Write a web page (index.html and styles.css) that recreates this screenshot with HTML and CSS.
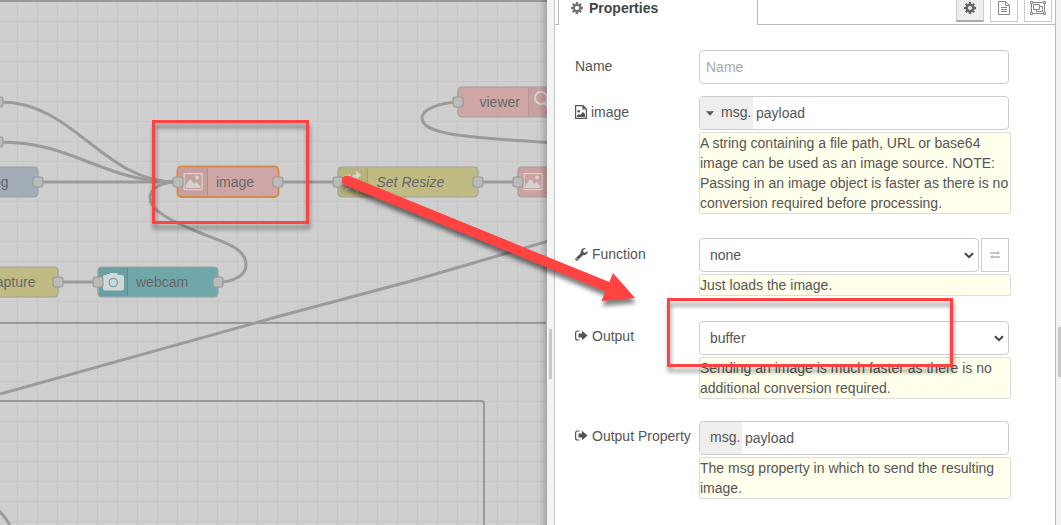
FILE: index.html
```html
<!DOCTYPE html>
<html lang="en">
<head>
<meta charset="utf-8">
<title>Flow editor</title>
<link rel="stylesheet" href="styles.css">
</head>
<body>
<div class="editor">
  <div class="workspace">
    <svg class="canvas" width="547" height="525" viewBox="0 0 547 525">
      <defs>
        <pattern id="grid" x="17" y="1" width="20" height="20" patternUnits="userSpaceOnUse">
          <path d="M0 0H20V1H1V20H0Z" fill="#c7c7c7"/>
        </pattern>
        <linearGradient id="edge"><stop offset="0" stop-color="#000" stop-opacity="0"/><stop offset="1" stop-color="#000" stop-opacity=".2"/></linearGradient>
        <g id="picture" fill="none" stroke="#d6d2d2">
          <rect x=".6" y=".6" width="18" height="16" stroke-width="1.2"/>
          <path d="M2 15V12L7 6L11 11L13 9L17 13V15Z" fill="#d6d2d2" stroke="none"/>
          <circle cx="13.500" cy="4.500" r="1.900" fill="#d6d2d2" stroke="none"/>
        </g>
      </defs>
      <rect width="547" height="525" fill="#cfcfcf"/>
      <rect width="547" height="525" fill="url(#grid)"/>
      <g class="group-line">
        <path d="M0 1H547M0 323H546M0 401H481Q484 401 484 404V525"/>
      </g>
      <g class="wire">
        <path d="M0 102C75 102 102 182 177 182"/>
        <path d="M0 142C75 142 102 182 177 182"/>
        <path d="M38 182H177M278 182H338M478 182H518M58 282H98"/>
        <path d="M218 282C234 282 246 275 246 265C246 247 222 242 198 232C172 221 150 211 150 198C150 188 162 182 177 182"/>
        <path d="M458 102C437 103 422 110 422 118C422 134 462 137 547 142.500"/>
        <path d="M0 394L280 316L415 280L547 241.500"/>
        <path d="M-6 506Q3 513 11 527"/>
      </g>
      <g class="node">
        <rect x="-60" y="167" width="98" height="30" rx="4" fill="#a3adb8"/>
        <rect x="177.500" y="166.500" width="101" height="30.500" rx="4" fill="#cfa6a6" class="selected"/>
        <rect x="338" y="167" width="140" height="30" rx="4" fill="#c0bb83"/>
        <rect x="458" y="87" width="140" height="30" rx="4" fill="#cfa6a6"/>
        <rect x="518" y="167" width="100" height="30" rx="4" fill="#cba1a1"/>
        <rect x="-60" y="267" width="118" height="30" rx="4" fill="#c0bb83"/>
        <rect x="98" y="267" width="120" height="30" rx="4" fill="#70a7aa"/>
      </g>
      <g fill="#000" fill-opacity=".04">
        <rect x="179" y="168" width="29" height="28"/>
        <rect x="339" y="168" width="29" height="28"/>
        <rect x="529" y="88" width="20" height="28"/>
        <rect x="99" y="268" width="29" height="28"/>
      </g>
      <path d="M207.500 168V196M367.500 168V196M528.500 88V116M127.500 268V296" stroke="#000" stroke-opacity=".1"/>
      <use href="#picture" x="183.500" y="173"/>
      <use href="#picture" x="523.500" y="173"/>
      <g class="glyph-line">
        <circle cx="541" cy="98" r="6"/><path d="M545 103L550 109" stroke-width="3"/>
        <path d="M345 176H349L351 179M345 189H349L354 176H357M354 189H358" stroke-width="2.500"/>
      </g>
      <path d="M356 170.500L361 175L356 179.500ZM356 185L361 189L356 193Z" fill="#d6d6ca"/>
      <path d="M105 275H107V274H109V275L110 273H117L118 275H122Q124 275 124 277V288.500Q124 290.500 122 290.500H105Q103 290.500 103 288.500V277Q103 275 105 275Z" fill="#d2d6d6"/>
      <circle cx="113.300" cy="282.500" r="4.200" fill="none" stroke="#70a7aa" stroke-width="1.300"/>
      <g class="port">
        <rect x="-7" y="97" width="10" height="10" rx="2.500"/>
        <rect x="-7" y="137" width="10" height="10" rx="2.500"/>
        <rect x="33" y="177" width="10" height="10" rx="2.500"/>
        <rect x="173" y="177" width="10" height="10" rx="2.500"/>
        <rect x="273" y="177" width="10" height="10" rx="2.500"/>
        <rect x="333" y="177" width="10" height="10" rx="2.500"/>
        <rect x="473" y="177" width="10" height="10" rx="2.500"/>
        <rect x="513" y="177" width="10" height="10" rx="2.500"/>
        <rect x="453" y="97" width="10" height="10" rx="2.500"/>
        <rect x="53" y="277" width="10" height="10" rx="2.500"/>
        <rect x="93" y="277" width="10" height="10" rx="2.500"/>
        <rect x="213" y="277" width="10" height="10" rx="2.500"/>
      </g>
      <g class="node-label">
        <text x="8.500" y="187" text-anchor="end">og</text>
        <text x="216" y="187">image</text>
        <text x="376.500" y="187" font-style="italic">Set Resize</text>
        <text x="479.500" y="107">viewer</text>
        <text x="35.500" y="287" text-anchor="end">apture</text>
        <text x="136" y="287">webcam</text>
      </g>
      <rect x="539" width="8" height="525" fill="url(#edge)"/>
    </svg>
  </div>
  <div class="separator"><span class="grip"></span></div>
  <main class="panel">
    <nav class="tabs">
      <div class="tab-stub"></div>
      <div class="tab">
        <svg width="12" height="12" viewBox="0 0 12 12"><g fill="#777"><circle cx="6" cy="6" r="4.600"/><path d="M5 0H7L7.300 12H4.700ZM0 5V7L12 7.300V4.700ZM1 2.400L2.400 1L11 9.600L9.600 11ZM9.600 1L11 2.400L2.400 11L1 9.600Z"/></g><circle cx="6" cy="6" r="2.100" fill="#fff"/></svg>
        <span>Properties</span>
      </div>
      <div class="tab-tools">
        <button class="tool tool-on"><svg width="12" height="12" viewBox="0 0 12 12"><g fill="#666"><circle cx="6" cy="6" r="4.600"/><path d="M5 0H7L7.300 12H4.700ZM0 5V7L12 7.300V4.700ZM1 2.400L2.400 1L11 9.600L9.600 11ZM9.600 1L11 2.400L2.400 11L1 9.600Z"/></g><circle cx="6" cy="6" r="2" fill="#eee"/></svg></button>
        <button class="tool"><svg width="12" height="14" viewBox="0 0 12 14" fill="none" stroke="#888"><path d="M.5 .5H7.500L11.500 4.500V13.500H.5ZM7.500 .5V4.500H11.500M3 6.500H9M3 8.500H9M3 10.500H9"/></svg></button>
        <button class="tool"><svg width="16" height="14" viewBox="0 0 16 14" fill="none" stroke="#888"><path d="M1.500 1.500H14.500V12.500H1.500ZM3.500 3.500H9.500V8.500H3.500ZM9.500 5.500H12.500V10.500H6.500V8.500"/><path d="M.5 .5H2.500V2.500H.5ZM13.500 .5H15.500V2.500H13.500ZM.5 11.500H2.500V13.500H.5ZM13.500 11.500H15.500V13.500H13.500Z" fill="#fff"/></svg></button>
      </div>
    </nav>
    <form class="form">
      <div class="row">
        <label class="label">Name</label>
        <div class="field"><div class="box"><span class="placeholder">Name</span></div></div>
      </div>
      <div class="row row-image">
        <label class="label"><svg class="icon-picture" width="12" height="14" viewBox="0 0 12 14"><path d="M.6 .6H8L11.400 4V13.400H.6ZM8 .6V4H11.400" fill="none" stroke="#555" stroke-width="1.200"/><circle cx="3.700" cy="6.200" r="1.300" fill="#555"/><path d="M2 12V10.500L4 9L5 10L8 7L10 9V12Z" fill="#555"/></svg>image</label>
        <div class="field">
          <div class="box typed"><span class="type type-menu"><svg width="8" height="5" viewBox="0 0 8 5"><path d="M0 .3H8L4 4.700Z" fill="#555"/></svg>msg.</span><span class="value">payload</span></div>
          <p class="tip">A string containing a file path, URL or base64 image can be used as an image source. NOTE: Passing in an image object is faster as there is no conversion required before processing.</p>
        </div>
      </div>
      <div class="row row-function">
        <label class="label"><svg class="icon" width="13" height="13" viewBox="0 0 13 13"><path d="M1.800 11.200L7.200 5.800" stroke="#555" stroke-width="3" stroke-linecap="round"/><path d="M12.600 3.200L9.800 4.800L8.200 3.900V2L11 .4Q9.500 -.4 7.700 .5Q5.300 2 5.700 4.700L8.300 7.300Q11 7.500 12.300 5.300Q12.900 4.300 12.600 3.200Z" fill="#555"/><circle cx="2.100" cy="10.900" r=".6" fill="#fff"/></svg>Function</label>
        <div class="field">
          <div class="pair">
            <div class="box select"><span>none</span><svg width="10" height="7" viewBox="0 0 10 7"><path d="M1 1.200L5 5.200L9 1.200" fill="none" stroke="#444" stroke-width="2"/></svg></div>
            <div class="swap"><svg width="10" height="8" viewBox="0 0 10 8"><path d="M0 2H8M2 6H10" stroke="#b5b5b5" stroke-width="1.400"/><path d="M7.500 0L10 2L7.500 4ZM2.500 4L0 6L2.500 8Z" fill="#b5b5b5"/></svg></div>
          </div>
          <p class="tip">Just loads the image.</p>
        </div>
      </div>
      <div class="row row-output">
        <label class="label"><svg class="icon icon-out" width="13" height="12" viewBox="0 0 13 12"><path d="M4.500 1H2.500Q.6 1 .6 3V8Q.6 10 2.500 10H4.500" fill="none" stroke="#555" stroke-width="1.200"/><path d="M3.500 3.500H7V.8L12.600 5.500L7 10.200V7.500H3.500Z" fill="#555"/></svg>Output</label>
        <div class="field">
          <div class="box select"><span>buffer</span><svg width="10" height="7" viewBox="0 0 10 7"><path d="M1 1.200L5 5.200L9 1.200" fill="none" stroke="#444" stroke-width="2"/></svg></div>
          <p class="tip">Sending an image is much faster as there is no additional conversion required.</p>
        </div>
      </div>
      <div class="row row-property">
        <label class="label"><svg class="icon icon-out" width="13" height="12" viewBox="0 0 13 12"><path d="M4.500 1H2.500Q.6 1 .6 3V8Q.6 10 2.500 10H4.500" fill="none" stroke="#555" stroke-width="1.200"/><path d="M3.500 3.500H7V.8L12.600 5.500L7 10.200V7.500H3.500Z" fill="#555"/></svg>Output Property</label>
        <div class="field">
          <div class="box typed"><span class="type">msg.</span><span class="value">payload</span></div>
          <p class="tip">The msg property in which to send the resulting image.</p>
        </div>
      </div>
    </form>
  </main>
  <div class="edge-bar"><span class="grip-right"></span></div>
</div>
<svg class="annotations" width="1061" height="525" viewBox="0 0 1061 525">
  <g class="marker">
    <rect x="153.500" y="121.500" width="154" height="101"/>
    <rect x="668.500" y="299.500" width="283" height="66"/>
  </g>
  <g class="arrow">
    <path d="M347 180.500L608 287" stroke="#ff4343" stroke-width="10" stroke-linecap="round"/>
    <path d="M613 273L635 298L601.500 301Z" fill="#ff4343"/>
  </g>
</svg>
</body>
</html>
```
FILE: styles.css
```css
* { box-sizing: border-box; }
body {
  margin: 0;
  overflow: hidden;
  font: 14px/20px "Liberation Sans", Arial, sans-serif;
  color: #555;
  background: #fff;
}
.editor { display: flex; width: 1061px; height: 525px; }
.workspace { flex: 0 0 547px; }
.canvas { display: block; }
.group-line path { fill: none; stroke: #999; stroke-width: 2; }
.wire path { fill: none; stroke: #9b9b9b; stroke-width: 3; }
.node rect { stroke: #a0a0a0; stroke-width: 1.2; }
.node .selected { stroke: #d58a4a; stroke-width: 2; }
.port rect { fill: #bbb; stroke: #999; stroke-width: 1.1; }
.node-label text { font: 14px "Liberation Sans", Arial, sans-serif; fill: #666; }
.node-label text[font-style="italic"] { font-style: italic; }
.glyph-line { fill: none; stroke: #d6d2d0; stroke-width: 2; }

.separator {
  flex: 0 0 8px;
  display: flex;
  align-items: flex-start;
  padding: 329px 0 0 2px;
  background: #f3f3f3;
  border-right: 1px solid #c5c5c5;
}
.grip { width: 3px; height: 50px; background: #c8c8c8; }

.panel { flex: 0 0 500px; background: #fff; }
.tabs { display: flex; height: 25px; }
.tab-stub { width: 4px; border-right: 1px solid #bbb; border-bottom: 1px solid #bbb; }
.tab {
  display: flex;
  align-items: flex-start;
  gap: 6px;
  width: 198px;
  padding: 2px 0 0 12px;
  font-weight: 700;
  color: #444;
}
.tab span { margin-top: -4px; }
.tab-tools {
  flex: 1;
  display: flex;
  justify-content: flex-end;
  align-items: flex-start;
  gap: 6px;
  padding-right: 3px;
  border-left: 1px solid #bbb;
  border-bottom: 1px solid #bbb;
}
.tool {
  display: flex;
  justify-content: center;
  align-items: flex-start;
  width: 28px;
  height: 22px;
  padding: 1px 0 0;
  background: #fff;
  border: 1px solid #ccc;
  border-top: 0;
}
.tool-on { padding-top: 2px; background: #eee; border-bottom: 2px solid #aaa; }

.form { display: flex; flex-direction: column; padding: 25px 0 0 20px; }
.row { display: flex; }
.row-image { margin-top: 12px; }
.row-function { margin-top: 24px; }
.row-output { margin-top: 25px; }
.row-property { margin-top: 22px; }
.label { flex: 0 0 124px; padding-top: 6px; white-space: nowrap; }
.row-output .label, .row-property .label { padding-top: 5px; }
.icon { margin-right: 4px; vertical-align: -2px; }
.icon-out { vertical-align: -1px; }
.icon-picture { margin-right: 4px; vertical-align: -2px; }
.field { width: 312px; }
.box {
  display: flex;
  align-items: center;
  width: 310px;
  height: 34px;
  border: 1px solid #ccc;
  border-radius: 4px;
  background: #fff;
  overflow: hidden;
}
.placeholder { padding-left: 6px; color: #aaa; }
.type {
  flex: none;
  display: flex;
  align-items: center;
  align-self: stretch;
  padding: 0 0 2px 10px;
  background: #eee;
  width: 42px;
}
.type svg { flex: none; margin-top: 2px; }
.type-menu { width: 53px; gap: 7px; padding-left: 6px; }
.value { padding-left: 3px; }
.select { justify-content: space-between; padding: 0 4px 0 10px; }
.pair { display: flex; gap: 2px; width: 310px; }
.pair .box { width: 280px; }
.swap {
  display: flex;
  align-items: center;
  justify-content: center;
  width: 28px;
  height: 34px;
  border: 1px solid #ccc;
}
.tip {
  width: 312px;
  margin: 2px 0 0;
  background: #ffffec;
  border: 1px solid #ddd;
  border-radius: 2px;
}
.edge-bar { flex: 1; padding: 327px 0 0 2px; background: #f3f3f3; border-left: 1px solid #bbb; }
.grip-right { display: block; width: 3px; height: 50px; background: #c8c8c8; }

/* Callouts drawn over the whole editor */
.annotations { position: absolute; left: 0; top: 0; pointer-events: none; }
.marker { filter: drop-shadow(1px 5px 2px rgba(0, 0, 0, .4)); }
.marker rect { fill: none; stroke: #ff4343; stroke-width: 3; }
.arrow { filter: drop-shadow(1px 5px 2px rgba(0, 0, 0, .5)); }
```
